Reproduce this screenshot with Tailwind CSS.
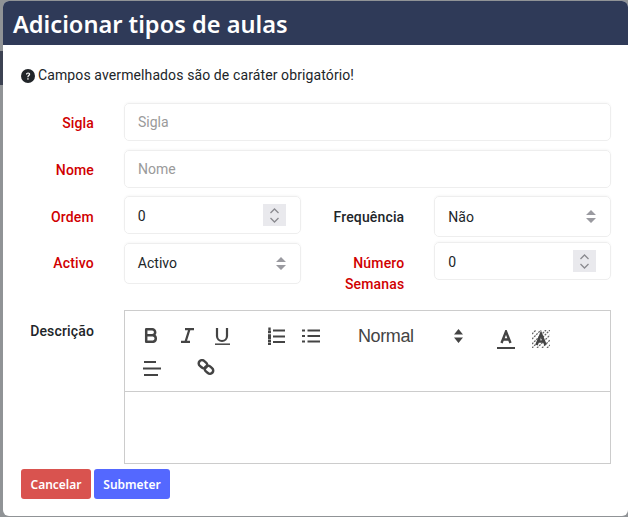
<!DOCTYPE html>
<html lang="pt">
<head>
    <meta charset="UTF-8">
    <title>Adicionar tipos de aulas</title>
    <script src="https://cdn.jsdelivr.net/npm/@tailwindcss/browser@4"></script>
</head>
<body class="relative bg-[#909396] h-[517px] w-[628px] overflow-hidden font-['Roboto',sans-serif] text-[14px] text-[#212529]">
    <!-- dimmed page behind the modal -->
    <div class="absolute left-0 top-[51px] w-[4px] h-[34px] bg-[#3c4252]"></div>

    <div class="relative ml-[3px] mt-px w-[625px] h-[515px] bg-white rounded-[6px] overflow-hidden">
        <!-- Header -->
        <div class="h-[44px] bg-[#2f3a58] pl-[10px] pt-[3px] flex items-center">
            <h1 class="font-['Noto_Sans',sans-serif] font-semibold text-[23.6px] text-white leading-none">Adicionar tipos de aulas</h1>
        </div>

        <div class="pl-[18px] pr-[17px]">
            <!-- Info -->
            <div class="mt-[22px] h-[17px] flex items-center gap-[3px] tracking-[0.11px]">
                <svg width="14" height="14" viewBox="0 0 14 14"><circle cx="7" cy="7" r="7" fill="#212529"/><path d="M4.900 5.400c.1-1.300 1-2 2.200-2 1.200 0 2.100.7 2.100 1.800 0 1.600-1.700 1.500-1.700 3H6.300c0-2 1.600-1.900 1.600-2.900 0-.5-.3-.8-.8-.8-.6 0-.9.4-1 .9z" fill="#fff"/><rect x="6.300" y="9.200" width="1.300" height="1.400" fill="#fff"/></svg>
                <span>Campos avermelhados são de caráter obrigatório!</span>
            </div>

            <!-- Sigla -->
            <div class="mt-[19px] flex">
                <label class="w-[73px] pt-[10px] text-right font-medium tracking-[0.15px] text-[#d00000]">Sigla</label>
                <input class="ml-[30px] w-[487px] h-[38px] px-[13px] rounded-[5px] border border-[#eeeeee] shadow-[0_-1px_2px_rgba(0,0,0,0.03)] placeholder:text-[#9a9a9a]" placeholder="Sigla">
            </div>

            <!-- Nome -->
            <div class="mt-[9px] flex">
                <label class="w-[73px] pt-[10px] text-right font-medium tracking-[0.15px] text-[#d00000]">Nome</label>
                <input class="ml-[30px] w-[487px] h-[38px] px-[13px] rounded-[5px] border border-[#eeeeee] shadow-[0_-1px_2px_rgba(0,0,0,0.03)] placeholder:text-[#9a9a9a]" placeholder="Nome">
            </div>

            <!-- Ordem / Frequencia -->
            <div class="mt-[8px] flex">
                <label class="w-[73px] pt-[11px] text-right font-medium tracking-[0.15px] text-[#d00000]">Ordem</label>
                <div class="ml-[30px] w-[177px] h-[38px] pl-[13px] pr-[14px] rounded-[5px] border border-[#eeeeee] shadow-[0_-1px_2px_rgba(0,0,0,0.03)] flex items-center justify-between">
                    <span class="pt-[2px]">0</span>
                    <span class="w-[23px] h-[22px] bg-[#e9e9ed] flex items-center justify-center">
                        <svg width="11" height="17" viewBox="0 0 11 17" fill="none" stroke="#8a8a8f" stroke-width="1.300"><path d="M1.500 6l4-4 4 4M1.500 11l4 4 4-4"/></svg>
                    </span>
                </div>
                <label class="w-[104px] pt-[11px] text-right font-medium tracking-[0.15px]">Frequência</label>
                <div class="ml-[30px] w-[177px] h-[41px] pl-[13px] pr-[14px] rounded-[5px] border border-[#eeeeee] shadow-[0_-1px_2px_rgba(0,0,0,0.03)] flex items-center justify-between">
                    <span class="pt-px">Não</span>
                    <svg width="10" height="13" viewBox="0 0 10 13" fill="#9a9aa0"><path d="M5 0l5 5H0zM5 13L0 8h10z"/></svg>
                </div>
            </div>

            <!-- Activo / Numero Semanas -->
            <div class="mt-[5px] flex">
                <label class="w-[73px] pt-[11px] text-right font-medium tracking-[0.15px] text-[#d00000]">Activo</label>
                <div class="ml-[30px] w-[177px] h-[41px] mt-[1px] pl-[13px] pr-[14px] rounded-[5px] border border-[#eeeeee] shadow-[0_-1px_2px_rgba(0,0,0,0.03)] flex items-center justify-between">
                    <span>Activo</span>
                    <svg width="10" height="13" viewBox="0 0 10 13" fill="#9a9aa0"><path d="M5 0l5 5H0zM5 13L0 8h10z"/></svg>
                </div>
                <label class="w-[104px] pt-[11px] text-right font-medium tracking-[0.15px] text-[#d00000] leading-[21px]">Número<br>Semanas</label>
                <div class="ml-[30px] w-[177px] h-[38px] pl-[13px] pr-[14px] rounded-[5px] border border-[#eeeeee] shadow-[0_-1px_2px_rgba(0,0,0,0.03)] flex items-center justify-between">
                    <span class="pt-[2px]">0</span>
                    <span class="w-[23px] h-[22px] bg-[#e9e9ed] flex items-center justify-center">
                        <svg width="11" height="17" viewBox="0 0 11 17" fill="none" stroke="#8a8a8f" stroke-width="1.300"><path d="M1.500 6l4-4 4 4M1.500 11l4 4 4-4"/></svg>
                    </span>
                </div>
            </div>

            <!-- Descricao -->
            <div class="mt-[15px] flex">
                <label class="w-[73px] pt-[11px] text-right font-medium tracking-[0.15px]">Descrição</label>
                <div class="ml-[30px] w-[487px] h-[154px] border border-[#cccccc] flex flex-col">
                    <div class="h-[81px] border-b border-[#cccccc]">
                        <div class="flex items-center h-[20px] mt-[15px] pl-[19px]">
                            <!-- bold -->
                            <svg width="18" height="18" viewBox="0 0 18 18" fill="none" stroke="#444" stroke-width="2.500" stroke-linejoin="round"><path d="M2.200 2.200h6a3 3 0 0 1 0 6H2.200zM2.200 8.200h7a3.400 3.400 0 0 1 0 6.600H2.200z"/></svg>
                            <!-- italic -->
                            <svg class="ml-[18px]" width="18" height="18" viewBox="0 0 18 18" fill="none" stroke="#444" stroke-width="2.200"><path d="M5 2.200h9M1 14.900h9M9.500 2.200L5.500 14.900"/></svg>
                            <!-- underline -->
                            <svg class="ml-[16px]" width="18" height="18" viewBox="0 0 18 18" fill="none" stroke="#444" stroke-width="2.200"><path d="M3 1v8a5 5 0 0 0 10 0V1"/><path d="M1 17.200h15" stroke-width="1.500"/></svg>
                            <!-- ordered list -->
                            <svg class="ml-[35px]" width="18" height="18" viewBox="0 0 18 18" fill="none" stroke="#444" stroke-width="2.200"><path d="M6 3.500h12M6 9.500h12M6 15h12"/><path d="M2.500 0.500v3M1 5h3M1 8.500h3M1 11h3M1 14h3M1 17h3" stroke-width="2.400"/></svg>
                            <!-- bullet list -->
                            <svg class="ml-[17px]" width="18" height="18" viewBox="0 0 18 18" fill="none" stroke="#444" stroke-width="2.200"><path d="M5.500 3.500H18M5.500 9H18M5.500 14.500H18"/><path d="M0 3.500h3M0 9h3M0 14.500h3"/></svg>
                            <span class="ml-[38px] font-['Liberation_Sans',sans-serif] text-[18px] tracking-[-0.4px] text-[#444444] leading-none">Normal</span>
                            <svg class="ml-[40px]" width="9" height="14" viewBox="0 0 9 14" fill="#444"><path d="M4.500 0L9 5.500H0zM4.500 14L0 8.500h9z"/></svg>
                            <!-- text colour -->
                            <svg class="ml-[34px] mt-[8px]" width="18" height="20" viewBox="0 0 18 20" fill="none" stroke="#444" stroke-width="2.400"><path d="M4.500 13L9 1.500 13.500 13M6 9.500h6"/><path d="M0 18h18" stroke-width="2"/></svg>
                            <!-- background colour -->
                            <svg class="ml-[17px] mt-[6px]" width="18" height="18" viewBox="0 0 18 18" fill="none" stroke="#666" stroke-width="1.300" stroke-dasharray="2 1"><path d="M0 4l4-4M0 9l9-9M0 14L14 0M0 18L18 0M5 18L18 5M10 18l8-8M15 18l3-3"/><path d="M4.500 15L9 4l4.500 11M6 11.500h6" stroke="#444" stroke-width="2.600" stroke-dasharray="none"/></svg>
                        </div>
                        <div class="flex items-center h-[20px] mt-[12px] pl-[18px]">
                            <svg width="18" height="18" viewBox="0 0 18 18" fill="none" stroke="#444" stroke-width="2.200"><path d="M1 3h12M0 9.500h18M1 16h14"/></svg>
                            <svg class="ml-[36px]" width="18" height="18" viewBox="0 0 18 18" fill="none" stroke="#444" stroke-width="2.500"><rect x="1.500" y="2" width="9" height="6.500" rx="3.200" transform="rotate(40 6 5.200)"/><rect x="7.500" y="7.500" width="9" height="6.500" rx="3.200" transform="rotate(40 12 10.700)"/></svg>
                        </div>
                    </div>
                </div>
            </div>

            <!-- Buttons -->
            <div class="mt-[5px] flex gap-[3px] font-['Noto_Sans',sans-serif] font-semibold text-[12px] text-white">
                <button class="w-[70px] h-[30px] pt-px rounded-[3px] bg-[#d9534f]">Cancelar</button>
                <button class="w-[76px] h-[30px] pt-px rounded-[3px] bg-[#5468ff]">Submeter</button>
            </div>
        </div>
    </div>
</body>
</html>
